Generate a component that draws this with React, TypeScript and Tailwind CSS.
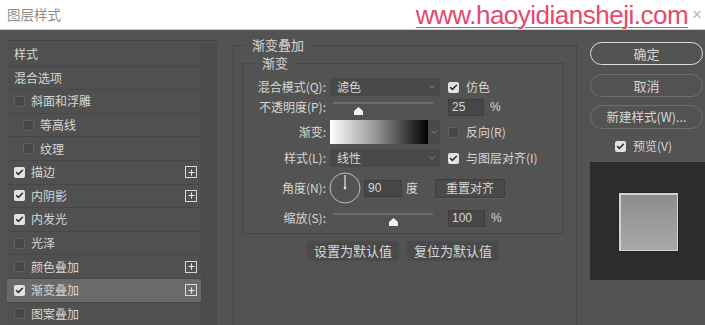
import { Check, ChevronDown, Plus } from "lucide-react";

type Row = {
  label: string;
  box?: boolean;
  checked?: boolean;
  indent?: boolean;
  plus?: boolean;
  active?: boolean;
};

const rows: Row[] = [
  { label: "样式" },
  { label: "混合选项" },
  { label: "斜面和浮雕", box: true },
  { label: "等高线", box: true, indent: true },
  { label: "纹理", box: true, indent: true },
  { label: "描边", box: true, checked: true, plus: true },
  { label: "内阴影", box: true, checked: true, plus: true },
  { label: "内发光", box: true, checked: true },
  { label: "光泽", box: true },
  { label: "颜色叠加", box: true, plus: true },
  { label: "渐变叠加", box: true, checked: true, plus: true, active: true },
  { label: "图案叠加", box: true },
];

function Box({ checked }: { checked?: boolean }) {
  if (checked) {
    return (
      <span className="flex h-[11px] w-[11px] flex-none items-center justify-center rounded-[2px] bg-[#e2e2e2]">
        <Check className="h-[9px] w-[9px] text-[#2e2e2e]" strokeWidth={4} />
      </span>
    );
  }
  return <span className="h-[11px] w-[11px] flex-none rounded-[2px] border border-[#606060] bg-[#474747]" />;
}

function PlusBox() {
  return (
    <span className="flex h-[12px] w-[12px] items-center justify-center border border-[#d8d8d8]">
      <Plus className="h-[9px] w-[9px] text-[#e8e8e8]" strokeWidth={3} />
    </span>
  );
}

function Select({ value }: { value: string }) {
  return (
    <div className="flex h-[18px] w-[110px] items-center justify-between bg-[#494949] pl-[7px] pr-[3px]">
      <span>{value}</span>
      <ChevronDown className="h-[10px] w-[10px] text-[#a8a8a8]" strokeWidth={1.5} />
    </div>
  );
}

function Slider({ at }: { at: number }) {
  return (
    <div className="flex h-[18px] w-[110px] flex-col pl-[3px] pr-[7px] pt-[4px]">
      <div className="h-[2px] w-full bg-[#6c6c6c]" />
      <div className="mt-[3px] flex">
        <span style={{ width: at }} />
        <svg width="9" height="8" viewBox="0 0 9 8" className="-ml-[4px]">
          <path d="M4.5 0 L9 4 L9 8 L0 8 L0 4 Z" fill="#f2f2f2" />
        </svg>
      </div>
    </div>
  );
}

function Field({ value, w }: { value: string; w: string }) {
  return (
    <div className={`flex h-[17px] items-center border border-[#3e3e3e] bg-[#474747] pl-[3px] font-['Liberation_Sans',sans-serif] text-[12px] ${w}`}>
      {value}
    </div>
  );
}

function Label({ text }: { text: string }) {
  return <span className="w-[83px] flex-none text-right">{text}</span>;
}

export default function App() {
  return (
    <div className="h-[325px] w-[705px] overflow-hidden bg-[#535353] font-['Noto_Sans_CJK_SC','Noto_Sans',sans-serif] text-[12px] text-[#d6d6d6]">
      <div className="flex h-[30px] items-center justify-between border-b border-[#c8c8c8] bg-white pl-[7px] pr-[3px]">
        <span className="text-[13.5px] leading-none text-[#8d8d8d]">图层样式</span>
        <div className="flex items-center">
          <span className="font-['Liberation_Sans',sans-serif] text-[26px] leading-[28px] tracking-[-0.5px] text-[#e6486c] underline decoration-[1px] underline-offset-[3px]">
            www.haoyidiansheji.com
          </span>
          <span className="ml-[4px] font-['Liberation_Sans',sans-serif] text-[17px] leading-none text-[#b8b8b8]">×</span>
        </div>
      </div>

      <div className="flex items-start">
        <div className="ml-[7px] mt-[10px] flex w-[210px] border-t border-[#444444] pt-[2px]">
          <div className="w-[194px]">
            {rows.map((row) => (
              <div
                key={row.label}
                className={`flex h-[23.6px] items-center gap-[6px] border-b border-[#464646] pr-[4px] ${row.indent ? "pl-[16px]" : "pl-[7px]"} ${row.active ? "bg-[#6a6a6a]" : "bg-[#505050]"}`}
              >
                {row.box ? <Box checked={row.checked} /> : null}
                <span className="flex-1">{row.label}</span>
                {row.plus ? <PlusBox /> : null}
              </div>
            ))}
          </div>
          <div className="h-[290px] w-[16px] border-l border-[#474747] bg-[#4b4b4b]" />
        </div>

        <fieldset className="ml-[16px] mt-[6px] h-[300px] w-[344px] border border-[#464646] pl-[8px]">
          <legend className="ml-[2px] px-[8px] text-[13px] leading-[18px]">渐变叠加</legend>
          <fieldset className="w-[322px] border border-[#464646] pb-[6px] pt-[6px]">
            <legend className="ml-[11px] px-[8px] text-[13px] leading-[18px]">渐变</legend>

            <div className="flex h-[18px] items-center">
              <Label text="混合模式(Q):" />
              <div className="ml-[4px]">
                <Select value="滤色" />
              </div>
              <div className="ml-[8px] flex items-center gap-[7px]">
                <Box checked />
                <span>仿色</span>
              </div>
            </div>

            <div className="mt-[2px] flex h-[18px] items-center">
              <Label text="不透明度(P):" />
              <div className="ml-[4px]">
                <Slider at={25} />
              </div>
              <div className="ml-[8px] flex items-center gap-[6px]">
                <Field value="25" w="w-[36px]" />
                <span className="font-['Liberation_Sans',sans-serif]">%</span>
              </div>
            </div>

            <div className="mt-[4px] flex h-[24px] items-center">
              <Label text="渐变:" />
              <div className="ml-[4px] flex h-[24px] w-[110px]">
                <div className="h-full w-[98px] bg-[linear-gradient(to_right,#ffffff,#9a9a9a_45%,#000000)]" />
                <div className="flex h-full w-[12px] items-center justify-center bg-[#494949]">
                  <ChevronDown className="h-[10px] w-[10px] text-[#a8a8a8]" strokeWidth={1.5} />
                </div>
              </div>
              <div className="ml-[8px] flex items-center gap-[7px]">
                <Box />
                <span>反向(R)</span>
              </div>
            </div>

            <div className="mt-[5px] flex h-[18px] items-center">
              <Label text="样式(L):" />
              <div className="ml-[4px]">
                <Select value="线性" />
              </div>
              <div className="ml-[8px] flex items-center gap-[7px]">
                <Box checked />
                <span>与图层对齐(I)</span>
              </div>
            </div>

            <div className="mt-[5px] flex h-[32px] items-center">
              <Label text="角度(N):" />
              <div className="ml-[3px] flex w-[109px] items-center">
                <svg width="32" height="32" viewBox="0 0 32 32">
                  <circle cx="16" cy="16" r="15" fill="none" stroke="#bdbdbd" strokeWidth="1" />
                  <line x1="16" y1="16" x2="16" y2="3" stroke="#e8e8e8" strokeWidth="1.2" />
                  <circle cx="16" cy="16" r="1.3" fill="#e8e8e8" />
                </svg>
                <div className="ml-[3px]">
                  <Field value="90" w="w-[38px]" />
                </div>
                <span className="ml-[4px]">度</span>
              </div>
              <div className="ml-[-3px] flex h-[19px] w-[70px] items-center justify-center border border-[#3f3f3f] bg-[#4a4a4a] shadow-[0_1px_0_#5d5d5d]">
                重置对齐
              </div>
            </div>

            <div className="mt-[5px] flex h-[18px] items-center">
              <Label text="缩放(S):" />
              <div className="ml-[4px]">
                <Slider at={60} />
              </div>
              <div className="ml-[8px] flex items-center gap-[6px]">
                <Field value="100" w="w-[37px]" />
                <span className="font-['Liberation_Sans',sans-serif]">%</span>
              </div>
            </div>
          </fieldset>

          <div className="ml-[66px] mt-[8px] flex gap-[10px]">
            <div className="flex h-[18px] w-[90px] items-center justify-center bg-[#4a4a4a] text-[13px] shadow-[0_0_2px_#3f3f3f]">设置为默认值</div>
            <div className="flex h-[18px] w-[90px] items-center justify-center bg-[#4a4a4a] text-[13px] shadow-[0_0_2px_#3f3f3f]">复位为默认值</div>
          </div>
        </fieldset>

        <div className="ml-[13px] flex w-[115px] flex-col">
          <div className="mt-[12px] flex h-[23px] w-[113px] items-center justify-center rounded-full border-[1.5px] border-[#dedede] text-[13px]">确定</div>
          <div className="mt-[9px] flex h-[23px] w-[113px] items-center justify-center rounded-full border border-[#6f6f6f] text-[13px]">取消</div>
          <div className="mt-[8px] flex h-[24px] w-[113px] items-center justify-center rounded-full border border-[#6f6f6f] text-[12.5px]">新建样式(W)...</div>
          <div className="ml-[25px] mt-[11px] flex h-[12px] items-center gap-[7px]">
            <Box checked />
            <span>预览(V)</span>
          </div>
          <div className="mt-[10px] h-[118px] w-[115px] bg-[#2c2c2c] pl-[29px] pt-[31px]">
            <div className="h-[58px] w-[59px] border-l-[2px] border-t-[2px] border-r border-b border-[#d2d2d2] bg-[linear-gradient(to_bottom,#8c8c8c,#a9a9a9)] shadow-[0_0_1px_#111]" />
          </div>
        </div>
      </div>
    </div>
  );
}
